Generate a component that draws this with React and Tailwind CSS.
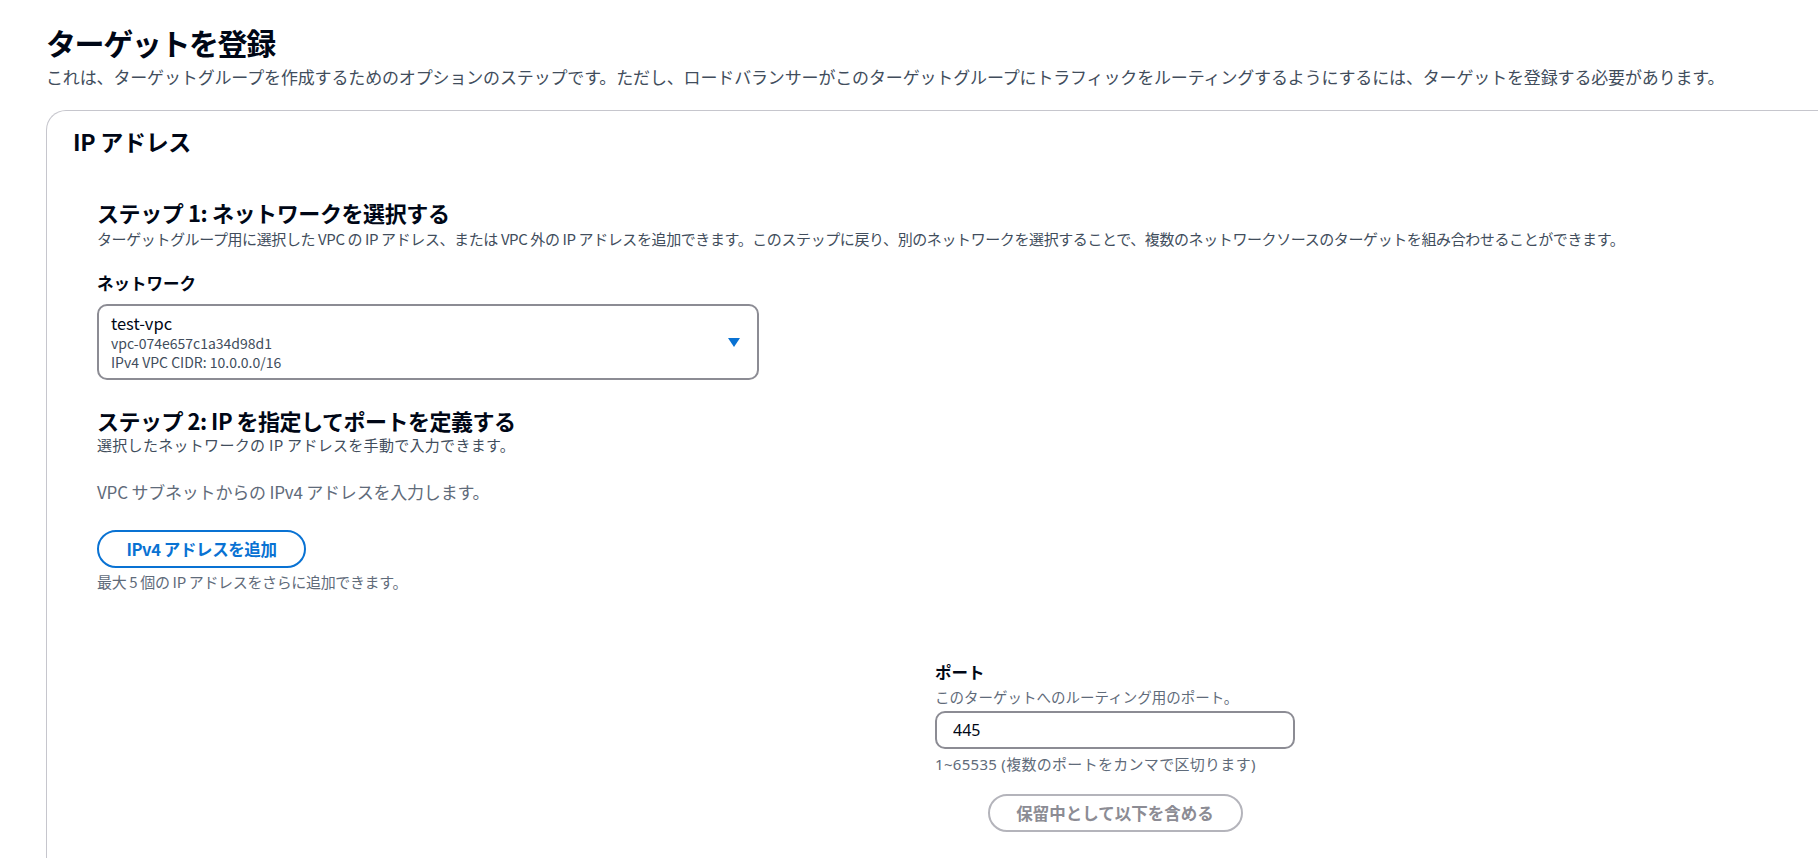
import React from 'react';

const jp = "font-['Noto_Sans_CJK_JP','Noto_Sans',sans-serif]";
const latin = "font-['Noto_Sans','Noto_Sans_CJK_JP',sans-serif]";

const App = () => {
  return (
    <div className={`min-h-screen bg-white overflow-hidden text-[#000716] ${jp}`}>
      <div className="pl-[46px] pt-[24px]">
        {/* Page header */}
        <h1 className="text-[30px] leading-[36px] font-bold tracking-[-1.4px]">ターゲットを登録</h1>
        <p className="mt-[5px] text-[17px] leading-[24px] text-[#414d5c] tracking-[-0.15px]">
          これは、ターゲットグループを作成するためのオプションのステップです。ただし、ロードバランサーがこのターゲットグループにトラフィックをルーティングするようにするには、ターゲットを登録する必要があります。
        </p>

        {/* Container */}
        <div className="mt-[21px] mr-[-40px] border-t border-l border-[#c6c6cd] rounded-tl-[20px] pb-[40px]">
          <h2 className="pl-[26px] pt-[16px] text-[23px] leading-[28px] font-bold tracking-[-0.3px]">IP アドレス</h2>

          <div className="pl-[50px]">
            {/* Step 1 */}
            <h3 className="mt-[43px] text-[22px] leading-[28px] font-bold tracking-[-0.4px]">ステップ 1: ネットワークを選択する</h3>
            <p className="mt-[3px] text-[15px] leading-[20px] text-[#414d5c] tracking-[-0.4px]">
              ターゲットグループ用に選択した VPC の IP アドレス、または VPC 外の IP アドレスを追加できます。このステップに戻り、別のネットワークを選択することで、複数のネットワークソースのターゲットを組み合わせることができます。
            </p>

            <div className="mt-[23px] text-[16.5px] leading-[22px] font-bold">ネットワーク</div>
            <button
              type="button"
              className="mt-[10px] w-[662px] h-[76px] border-2 border-[#8c8c94] rounded-[10px] flex items-center justify-between pl-[12px] pr-[17px] text-left"
            >
              <div className="flex flex-col">
                <span className="text-[16.5px] leading-[21px]">test-vpc</span>
                <span className="text-[14px] leading-[19px] text-[#414d5c]">vpc-074e657c1a34d98d1</span>
                <span className="text-[14px] leading-[19px] text-[#414d5c]">IPv4 VPC CIDR: 10.0.0.0/16</span>
              </div>
              <svg width="12" height="9" viewBox="0 0 12 9">
                <path d="M0 0h12L6 9z" fill="#0972d3" />
              </svg>
            </button>

            {/* Step 2 */}
            <h3 className="mt-[26px] text-[22px] leading-[28px] font-bold tracking-[-0.5px]">ステップ 2: IP を指定してポートを定義する</h3>
            <p className="mt-[1px] text-[15px] leading-[20px] text-[#414d5c] tracking-[0.3px]">
              選択したネットワークの IP アドレスを手動で入力できます。
            </p>

            <p className="mt-[25px] text-[17px] leading-[24px] text-[#5f6b7a] tracking-[-0.2px]">
              VPC サブネットからの IPv4 アドレスを入力します。
            </p>

            <button
              type="button"
              className="mt-[26px] w-[209px] h-[38px] border-2 border-[#0972d3] rounded-full text-[#0972d3] text-[16.5px] font-bold tracking-[-0.4px] flex items-center justify-center"
            >
              IPv4 アドレスを追加
            </button>
            <p className="mt-[4px] text-[15px] leading-[20px] text-[#5f6b7a] tracking-[-0.35px]">
              最大 5 個の IP アドレスをさらに追加できます。
            </p>

            {/* Port */}
            <div className="mt-[69px] grid grid-cols-[838px_360px]">
              <div />
              <div className="flex flex-col">
                <div className="text-[16.5px] leading-[22px] font-bold">ポート</div>
                <div className="mt-[4px] text-[14.5px] leading-[20px] text-[#5f6b7a]">このターゲットへのルーティング用のポート。</div>
                <input
                  type="text"
                  defaultValue="445"
                  className={`mt-[4px] w-[360px] h-[38px] border-2 border-[#8c8c94] rounded-[10px] pl-[16px] text-[16px] outline-none ${latin}`}
                />
                <div className={`mt-[5px] text-[15px] leading-[20px] text-[#5f6b7a] tracking-[0.3px] ${latin}`}>1~65535 (複数のポートをカンマで区切ります)</div>
                <div className="mt-[20px] flex justify-center">
                  <button
                    type="button"
                    disabled
                    className="w-[255px] h-[38px] border-2 border-[#b4b4bb] rounded-full text-[#8c8c94] text-[16.5px] font-bold flex items-center justify-center"
                  >
                    保留中として以下を含める
                  </button>
                </div>
              </div>
            </div>
          </div>
        </div>
      </div>
    </div>
  );
};

export default App;
